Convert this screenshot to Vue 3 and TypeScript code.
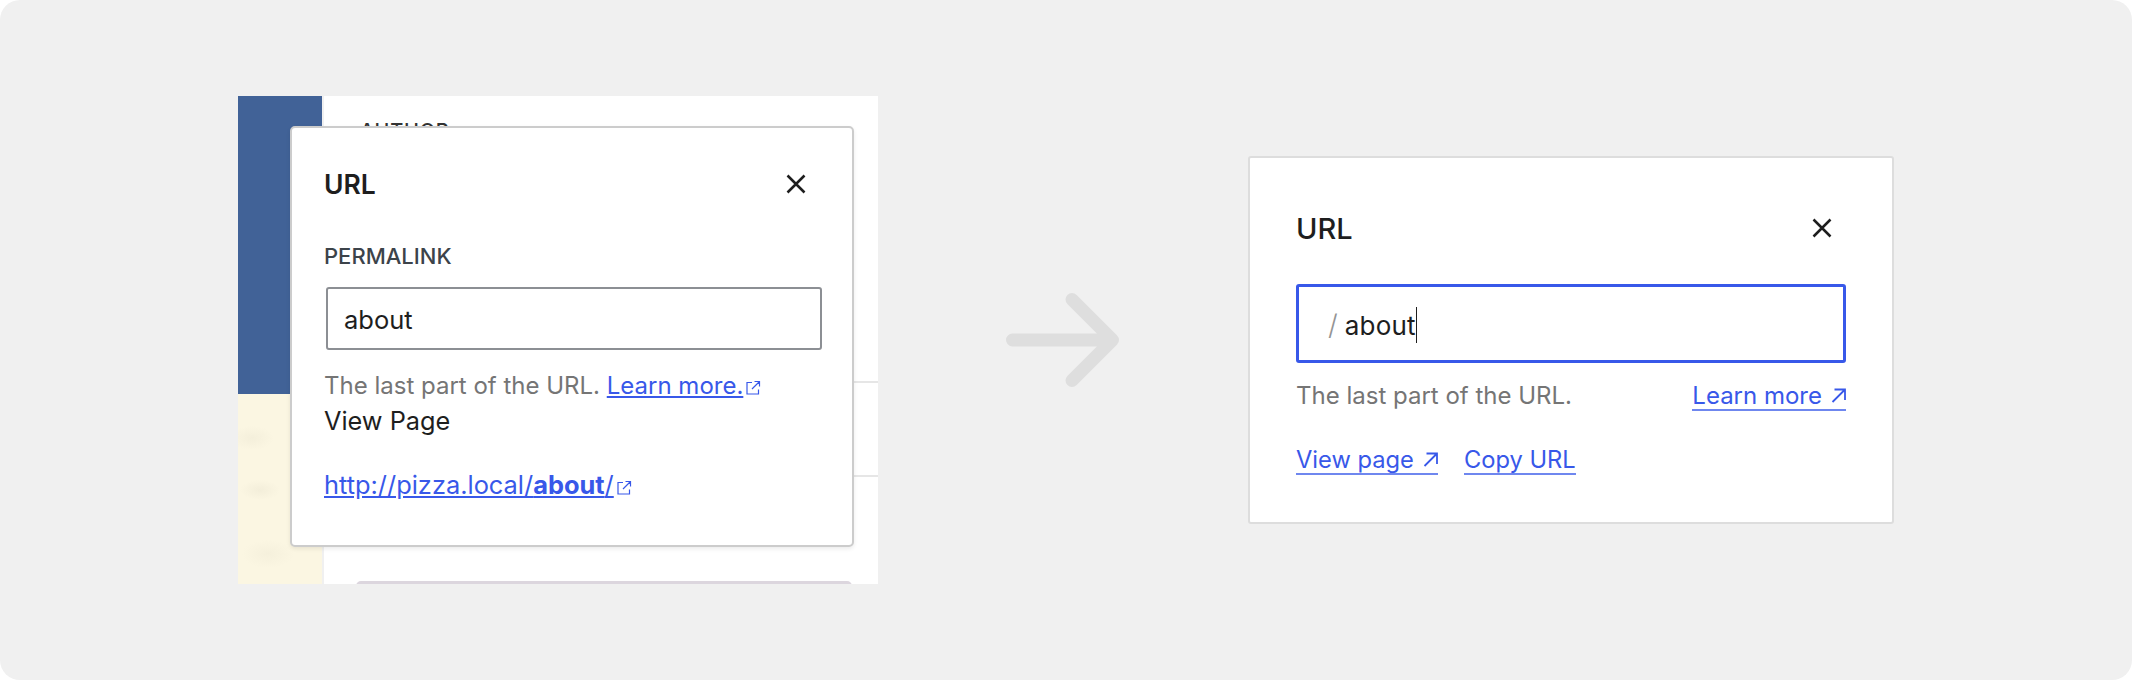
<script setup lang="ts">
const title = "URL";
const help = "The last part of the URL.";
</script>

<template>
  <div class="page">
    <div class="before">
      <div class="side">
        <div class="side-blue"></div>
        <div class="side-cream"></div>
      </div>
      <div class="panel">
        <div class="panel-label">AUTHOR</div>
        <div class="panel-row first"></div>
        <div class="panel-row second"></div>
        <div class="panel-thumb"></div>
      </div>

      <div class="popover">
        <div class="pop-head">
          <span class="pop-title">{{ title }}</span>
          <svg class="close" width="22" height="22" viewBox="0 0 22 22">
            <path d="M2.5 2.5 L19.5 19.5 M19.5 2.5 L2.5 19.5" stroke="#1e1e1e" stroke-width="2.5" fill="none" />
          </svg>
        </div>
        <div class="permalink">PERMALINK</div>
        <div class="old-input">about</div>
        <div class="old-help">
          {{ help }}
          <a class="old-link">Learn more.</a>
          <svg class="ext" width="16" height="16" viewBox="0 0 16 16">
            <path d="M7 2.5 H2 V14 H13.5 V9.5 M9.5 1.5 H14.5 V6.5 M14.5 1.5 L7 9" stroke="#3858e9" stroke-width="1.2" fill="none" />
          </svg>
        </div>
        <div class="view-old">View Page</div>
        <div class="old-url">
          <a class="old-link">http://pizza.local/<b>about</b>/</a>
          <svg class="ext" width="16" height="16" viewBox="0 0 16 16">
            <path d="M7 2.5 H2 V14 H13.5 V9.5 M9.5 1.5 H14.5 V6.5 M14.5 1.5 L7 9" stroke="#3858e9" stroke-width="1.2" fill="none" />
          </svg>
        </div>
      </div>
    </div>

    <svg class="arrow" width="113" height="94" viewBox="0 0 113 94">
      <path d="M6.5 47 H106.5 M66 6.5 L106.5 47 L66 87.5" stroke="#dedede" stroke-width="13" stroke-linecap="round" stroke-linejoin="round" fill="none" />
    </svg>

    <div class="card">
      <div class="card-head">
        <span class="card-title">{{ title }}</span>
        <svg class="close" width="22" height="22" viewBox="0 0 22 22">
          <path d="M2.5 2.5 L19.5 19.5 M19.5 2.5 L2.5 19.5" stroke="#1e1e1e" stroke-width="2.5" fill="none" />
        </svg>
      </div>
      <div class="new-input">
        <span class="slash">/</span>
        <span class="value">about</span>
        <span class="caret"></span>
      </div>
      <div class="help-row">
        <span class="help">{{ help }}</span>
        <a class="new-link">
          Learn more
          <svg width="15" height="15" viewBox="0 0 15 15">
            <path d="M1.5 14 L14 1.5 M3.5 1.5 H14 V12" stroke="#3858e9" stroke-width="1.8" fill="none" />
          </svg>
        </a>
      </div>
      <div class="actions">
        <a class="new-link">
          View page
          <svg width="15" height="15" viewBox="0 0 15 15">
            <path d="M1.5 14 L14 1.5 M3.5 1.5 H14 V12" stroke="#3858e9" stroke-width="1.8" fill="none" />
          </svg>
        </a>
        <a class="new-link">Copy URL</a>
      </div>
    </div>
  </div>
</template>

<style>
html,
body {
  margin: 0;
  background: #fff;
}
</style>

<style scoped>
.page {
  width: 2132px;
  height: 680px;
  box-sizing: border-box;
  background: #f0f0f0;
  border-radius: 20px;
  overflow: hidden;
  display: flex;
  align-items: flex-start;
  padding: 96px 0 0 238px;
  font-family: Inter, "Liberation Sans", sans-serif;
  color: #1e1e1e;
}

/* left side, cropped screenshot of the old panel */
.before {
  position: relative;
  flex: none;
  width: 640px;
  height: 488px;
  display: flex;
  overflow: hidden;
  background: #fff;
}
.side {
  width: 84px;
  border-right: 2px solid #f0f0f0;
  display: flex;
  flex-direction: column;
}
.side-blue {
  height: 298px;
  background: #416297;
}
.side-cream {
  flex: 1;
  background:
    radial-gradient(ellipse 22px 12px at 14px 44px, #f4efdb, transparent),
    radial-gradient(ellipse 20px 10px at 22px 96px, #f3eeda, transparent),
    radial-gradient(ellipse 26px 14px at 30px 160px, #f5f0dc, transparent),
    #fbf6e2;
}
.panel {
  flex: 1;
  position: relative;
}
.panel-label {
  position: absolute;
  left: 36px;
  top: 23px;
  font-size: 20px;
  font-weight: 500;
  color: #333;
  letter-spacing: 0.8px;
}
.panel-row {
  position: absolute;
  left: 0;
  right: 0;
  height: 2px;
  background: #e6e6e6;
}
.panel-row.first {
  top: 285px;
}
.panel-row.second {
  top: 379px;
}
.panel-thumb {
  position: absolute;
  left: 32px;
  right: 26px;
  top: 485px;
  height: 6px;
  border-radius: 5px 5px 0 0;
  background: #dcd6de;
}

.popover {
  position: absolute;
  left: 52px;
  top: 30px;
  width: 564px;
  height: 421px;
  box-sizing: border-box;
  background: #fff;
  border: 2px solid #ccc;
  border-radius: 5px;
  box-shadow: 0 2px 4px rgba(0, 0, 0, 0.08);
  padding: 41px 32px 0;
}
.pop-head {
  display: flex;
  justify-content: space-between;
  align-items: center;
  height: 30px;
  padding-right: 13px;
}
.pop-title {
  font-size: 26.5px;
  font-weight: 600;
}
.permalink {
  margin-top: 45px;
  font-size: 22px;
  line-height: 24px;
  font-weight: 500;
  color: #3c434a;
}
.old-input {
  margin: 19px 0 0 2px;
  height: 63px;
  width: 496px;
  box-sizing: border-box;
  border: 2px solid #8c8f94;
  border-radius: 3px;
  padding: 2px 0 0 16px;
  display: flex;
  align-items: center;
  font-size: 25.5px;
  color: #1e1e1e;
}
.old-help {
  margin-top: 21px;
  font-size: 24px;
  line-height: 30px;
  color: #757575;
  white-space: nowrap;
}
.old-link {
  color: #3858e9;
  text-decoration: underline;
}
.ext {
  vertical-align: -2px;
  margin-left: 2px;
}
.view-old {
  margin-top: 4px;
  font-size: 25.3px;
  line-height: 32px;
}
.old-url {
  margin-top: 32px;
  font-size: 25.4px;
  line-height: 32px;
  white-space: nowrap;
}

.arrow {
  flex: none;
  margin: 197px 0 0 128px;
}

/* right side, the new popover */
.card {
  flex: none;
  margin: 60px 0 0 129px;
  width: 646px;
  height: 368px;
  box-sizing: border-box;
  background: #fff;
  border: 2px solid #ddd;
  border-radius: 3px;
  padding: 54px 46px 0 46px;
}
.card-head {
  display: flex;
  justify-content: space-between;
  align-items: center;
  height: 32px;
  padding-right: 13px;
}
.card-title {
  font-size: 29px;
  font-weight: 500;
}
.new-input {
  margin-top: 40px;
  height: 79px;
  box-sizing: border-box;
  border: 3px solid #3858e9;
  border-radius: 3px;
  padding: 3px 0 0 29px;
  display: flex;
  align-items: center;
  font-size: 26px;
}
.slash {
  color: #949494;
  font-weight: 300;
  font-size: 28px;
  margin-right: 7px;
}
.value {
  letter-spacing: 0.2px;
}
.caret {
  width: 1.5px;
  height: 36px;
  background: #1e1e1e;
}
.help-row {
  margin-top: 17px;
  display: flex;
  justify-content: space-between;
  align-items: center;
  font-size: 24px;
  line-height: 32px;
}
.help {
  color: #757575;
}
.new-link {
  display: inline-flex;
  align-items: center;
  gap: 9px;
  color: #3858e9;
  border-bottom: 2px solid #6f87ef;
  line-height: 27px;
}
.actions {
  margin-top: 34px;
  display: flex;
  gap: 26px;
  font-size: 23.7px;
}
</style>
